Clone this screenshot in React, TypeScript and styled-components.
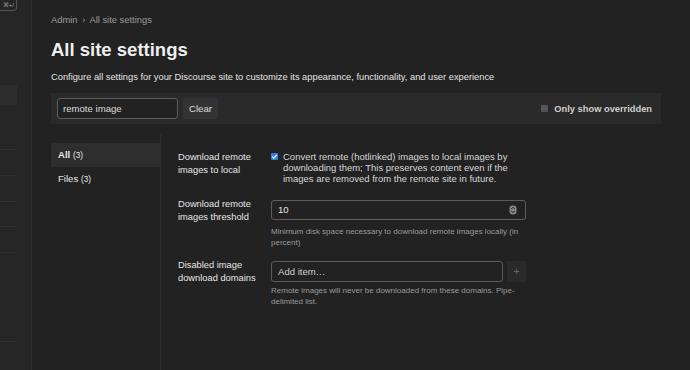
import styled, { createGlobalStyle } from 'styled-components';

const GlobalStyle = createGlobalStyle`
    html, body {
        margin: 0;
        padding: 0;
        background: #222222;
        font-family: "Liberation Sans", Arial, sans-serif;
        color: #dddddd;
    }
`

const settings = [
    {
        label: 'Download remote images to local',
        kind: 'checkbox',
        mt: 0,
        text: 'Convert remote (hotlinked) images to local images by downloading them; This preserves content even if the images are removed from the remote site in future.',
    },
    {
        label: 'Download remote images threshold',
        kind: 'number',
        mt: 14,
        value: '10',
        help: 'Minimum disk space necessary to download remote images locally (in percent)',
    },
    {
        label: 'Disabled image download domains',
        kind: 'list',
        mt: 11.5,
        help: 'Remote images will never be downloaded from these domains. Pipe-delimited list.',
    },
]

const sideRows = [45, 26, 26, 25, 26, 89]

const Spinner = () => (
    <svg width="8" height="10" viewBox="0 0 8 10">
        <rect x="0.5" y="0.5" width="7" height="9" rx="3" fill="#888" />
        <path d="M2.2 4 L4 2.4 L5.8 4" stroke="#222" strokeWidth="1" fill="none" />
        <path d="M2.2 6 L4 7.6 L5.8 6" stroke="#222" strokeWidth="1" fill="none" />
    </svg>
)

const App = (): JSX.Element => {
    return (
        <Page>
            <GlobalStyle />
            <Sidebar>
                <SideInner>
                    <Kbd>⌘+/</Kbd>
                    <SideSpacer />
                    <SideActive />
                    {sideRows.map((h, i) => <SideRow key={i} $h={h} />)}
                </SideInner>
            </Sidebar>
            <Main>
                <Breadcrumb>Admin <Chevron>›</Chevron> All site settings</Breadcrumb>
                <Title>All site settings</Title>
                <Description>Configure all settings for your Discourse site to customize its appearance, functionality, and user experience</Description>
                <FilterBar>
                    <FilterInput defaultValue="remote image" />
                    <ClearButton>Clear</ClearButton>
                    <Overridden>
                        <GrayBox />
                        Only show overridden
                    </Overridden>
                </FilterBar>
                <Body>
                    <Nav>
                        <NavItem $active>All <Count>(3)</Count></NavItem>
                        <NavItem>Files <Count>(3)</Count></NavItem>
                    </Nav>
                    <Settings>
                        {settings.map((s) => (
                            <SettingRow key={s.label} $mt={s.mt}>
                                <Label>{s.label}</Label>
                                <Control $offset={s.kind !== 'checkbox'}>
                                    {s.kind === 'checkbox' && (
                                        <CheckLine>
                                            <BlueCheck>
                                                <svg width="7" height="7" viewBox="0 0 7 7">
                                                    <path d="M1.3 3.6 L2.8 5.1 L5.8 1.8" stroke="#fff" strokeWidth="1.2" fill="none" />
                                                </svg>
                                            </BlueCheck>
                                            <CheckText>{s.text}</CheckText>
                                        </CheckLine>
                                    )}
                                    {s.kind === 'number' && (
                                        <>
                                            <NumberBox>
                                                <span>{s.value}</span>
                                                <Spinner />
                                            </NumberBox>
                                            <Help $mt={6}>{s.help}</Help>
                                        </>
                                    )}
                                    {s.kind === 'list' && (
                                        <>
                                            <ListLine>
                                                <TextBox>Add item…</TextBox>
                                                <PlusButton>+</PlusButton>
                                            </ListLine>
                                            <Help $mt={3}>{s.help}</Help>
                                        </>
                                    )}
                                </Control>
                            </SettingRow>
                        ))}
                    </Settings>
                </Body>
            </Main>
        </Page>
    )
}

export default App

const Page = styled.div`
    display: flex;
    width: 690px;
    height: 370px;
    overflow: hidden;
`
const Sidebar = styled.div`
    width: 31px;
    flex-shrink: 0;
    background: #262626;
    border-right: 1px solid #303030;
    overflow: hidden;
`
const SideInner = styled.div`
    width: 17px;
    display: flex;
    flex-direction: column;
`
const Kbd = styled.div`
    height: 12px;
    margin-top: -1px;
    margin-left: -12px;
    width: 29px;
    border: 1px solid #555;
    border-radius: 0 0 3px 3px;
    font-size: 6px;
    line-height: 11px;
    color: #999;
    text-align: right;
    padding-right: 2px;
    box-sizing: border-box;
`
const SideSpacer = styled.div`
    height: 74px;
`
const SideActive = styled.div`
    height: 20px;
    background: #2d2d2d;
`
const SideRow = styled.div<{ $h: number }>`
    height: ${p => p.$h - 1}px;
    border-bottom: 1px solid #303030;
`
const Main = styled.div`
    flex: 1;
    padding: 13px 29px 0 19px;
    min-width: 0;
`
const Breadcrumb = styled.div`
    font-size: 9.4px;
    line-height: 14px;
    color: #9a9a9a;
`
const Chevron = styled.span`
    margin: 0 2px;
`
const Title = styled.h1`
    margin: 11px 0 0;
    font-size: 18.5px;
    line-height: 23px;
    font-weight: bold;
    color: #eeeeee;
`
const Description = styled.p`
    margin: 9px 0 0;
    font-size: 9.3px;
    line-height: 14px;
    color: #e2e2e2;
`
const FilterBar = styled.div`
    margin-top: 9px;
    height: 31px;
    background: #2a2a2a;
    display: flex;
    align-items: center;
    padding: 0 9px 0 6px;
    gap: 5px;
`
const FilterInput = styled.input`
    width: 121px;
    height: 21px;
    box-sizing: border-box;
    background: #222;
    border: 1px solid #5c5c5c;
    border-radius: 3px;
    color: #ddd;
    font-family: inherit;
    font-size: 9.6px;
    padding: 0 5px;
    outline: none;
`
const ClearButton = styled.button`
    height: 21px;
    width: 35px;
    background: #333;
    border: none;
    border-radius: 2px;
    color: #ddd;
    font-family: inherit;
    font-size: 9.6px;
    padding: 0;
`
const Overridden = styled.label`
    margin-left: auto;
    display: flex;
    align-items: center;
    gap: 6px;
    font-size: 9.3px;
    font-weight: bold;
    color: #cfcfcf;
`
const GrayBox = styled.span`
    width: 7px;
    height: 7px;
    background: #555;
    border-radius: 1px;
`
const Body = styled.div`
    margin-top: 10px;
    display: grid;
    grid-template-columns: 110px 1fr;
    height: 240px;
`
const Nav = styled.div`
    border-right: 1px solid #2e2e2e;
    padding-top: 9px;
`
const NavItem = styled.div<{ $active?: boolean }>`
    height: 24px;
    line-height: 24px;
    padding-left: 7px;
    font-size: 9.6px;
    font-weight: ${p => (p.$active ? 'bold' : 'normal')};
    background: ${p => (p.$active ? '#2e2e2e' : 'transparent')};
    color: #e6e6e6;
`
const Count = styled.span`
    font-size: 8.2px;
    font-weight: normal;
`
const Settings = styled.div`
    padding: 17px 0 0 17px;
    display: flex;
    flex-direction: column;
`
const SettingRow = styled.div<{ $mt: number }>`
    margin-top: ${p => p.$mt}px;
    display: grid;
    grid-template-columns: 86px 255px;
    column-gap: 7px;
    align-items: start;
`
const Label = styled.div`
    font-size: 9.3px;
    line-height: 12.5px;
    color: #e6e6e6;
`
const Control = styled.div<{ $offset?: boolean }>`
    margin-top: ${p => (p.$offset ? '1.5px' : '0')};
    display: flex;
    flex-direction: column;
`
const CheckLine = styled.div`
    display: flex;
    align-items: flex-start;
    gap: 5px;
`
const BlueCheck = styled.span`
    flex-shrink: 0;
    width: 7px;
    height: 7px;
    margin-top: 2px;
    background: #2f7de1;
    border-radius: 1px;
    display: flex;
`
const CheckText = styled.div`
    font-size: 9.5px;
    line-height: 11px;
    color: #d6d6d6;
    max-width: 228px;
`
const NumberBox = styled.div`
    height: 20px;
    box-sizing: border-box;
    border: 1px solid #5c5c5c;
    border-radius: 3px;
    display: flex;
    align-items: center;
    justify-content: space-between;
    padding: 0 8px 0 6px;
    font-size: 9.6px;
    color: #e6e6e6;
`
const ListLine = styled.div`
    display: flex;
    gap: 4px;
`
const TextBox = styled.div`
    flex: 1;
    height: 21px;
    box-sizing: border-box;
    border: 1px solid #5c5c5c;
    border-radius: 3px;
    display: flex;
    align-items: center;
    padding: 0 6px;
    font-size: 9.6px;
    color: #cfcfcf;
`
const PlusButton = styled.div`
    width: 19px;
    height: 21px;
    background: #2a2a2a;
    color: #666;
    font-size: 11px;
    display: flex;
    align-items: center;
    justify-content: center;
`
const Help = styled.div<{ $mt: number }>`
    margin-top: ${p => p.$mt}px;
    font-size: 8px;
    line-height: 11px;
    color: #9a9a9a;
`
